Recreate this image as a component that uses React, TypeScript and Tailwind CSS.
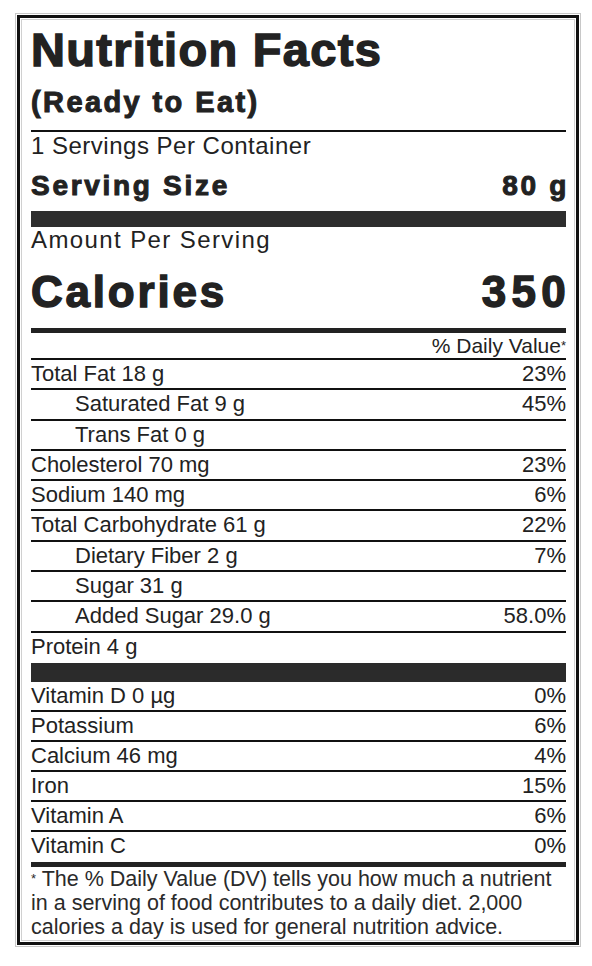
const topRows = [
  { label: "Total Fat 18 g", dv: "23%" },
  { label: "Saturated Fat 9 g", dv: "45%", indent: true },
  { label: "Trans Fat 0 g", dv: "", indent: true },
  { label: "Cholesterol 70 mg", dv: "23%" },
  { label: "Sodium 140 mg", dv: "6%" },
  { label: "Total Carbohydrate 61 g", dv: "22%" },
  { label: "Dietary Fiber 2 g", dv: "7%", indent: true },
  { label: "Sugar 31 g", dv: "", indent: true },
  { label: "Added Sugar 29.0 g", dv: "58.0%", indent: true },
];

const vitaminRows = [
  { label: "Vitamin D 0 µg", dv: "0%" },
  { label: "Potassium", dv: "6%" },
  { label: "Calcium 46 mg", dv: "4%" },
  { label: "Iron", dv: "15%" },
  { label: "Vitamin A", dv: "6%" },
  { label: "Vitamin C", dv: "0%" },
];

function Row({
  label,
  dv,
  indent,
  last,
  height,
}: {
  label: string;
  dv: string;
  indent?: boolean;
  last?: boolean;
  height: string;
}) {
  return (
    <div
      className={`flex justify-between pt-px text-[22px] leading-[25px] ${height} ${
        last ? "" : "border-b-2 border-[#111]"
      }`}
    >
      <span className={indent ? "pl-[44px]" : ""}>{label}</span>
      <span>{dv}</span>
    </div>
  );
}

export default function App() {
  return (
    <div className="min-h-screen bg-white pl-[15px] pt-[13px] font-['Liberation_Sans',Arial,sans-serif] text-[#222]">
      <div className="w-[566px] border border-[#c8c8c8] p-px">
        <div className="border-[3px] border-[#111] p-px">
          <div className="border border-[#d0d0d0] pb-px pl-[9px] pr-[8px]">
            {/* header */}
            <div className="pt-[7px] text-[47px] font-bold leading-[46px] tracking-[1.3px] [-webkit-text-stroke:1.4px_#222]">
              Nutrition Facts
            </div>
            <div className="mt-[13px] border-b-2 border-[#111] pb-[12px] text-[29px] font-bold leading-[32px] tracking-[2.4px] [-webkit-text-stroke:1px_#222]">
              (Ready to Eat)
            </div>
            <div className="mt-px text-[24px] leading-[26px] tracking-[0.5px]">
              1 Servings Per Container
            </div>
            <div className="mt-[12px] flex justify-between text-[28px] font-bold leading-[30px] tracking-[2.7px] [-webkit-text-stroke:1px_#222]">
              <span>Serving Size</span>
              <span className="mr-[-3px]">80 g</span>
            </div>
            <div className="mt-[10px] h-[16px] bg-[#2e2e2e]" />

            <div className="text-[24px] leading-[26px] tracking-[1.4px]">
              Amount Per Serving
            </div>
            <div className="mt-[16px] flex justify-between text-[44px] font-bold leading-[46px] [-webkit-text-stroke:1.4px_#222]">
              <span className="tracking-[2.8px]">Calories</span>
              <span className="mr-[-5px] tracking-[5.3px]">350</span>
            </div>
            <div className="mt-[13px] h-[5px] bg-[#222]" />

            <div className="border-b-2 border-[#111] text-right text-[21px] leading-[25px]">
              % Daily Value<span className="align-top text-[13px]">*</span>
            </div>

            {topRows.map((r) => (
              <Row key={r.label} {...r} height="h-[30.3px]" />
            ))}
            <Row label="Protein 4 g" dv="" last height="h-[30.3px]" />
            <div className="h-[19px] bg-[#2b2b2b]" />

            {vitaminRows.map((r, i) => (
              <Row
                key={r.label}
                {...r}
                last={i === vitaminRows.length - 1}
                height="h-[30px]"
              />
            ))}
            <div className="h-[5px] bg-[#222]" />

            <p className="text-[21.5px] leading-[24px] text-[#2a2a2a]">
              <span className="align-top text-[13px]">*</span> The % Daily Value
              (DV) tells you how much a nutrient
              <br />
              in a serving of food contributes to a daily diet. 2,000
              <br />
              calories a day is used for general nutrition advice.
            </p>
          </div>
        </div>
      </div>
    </div>
  );
}
